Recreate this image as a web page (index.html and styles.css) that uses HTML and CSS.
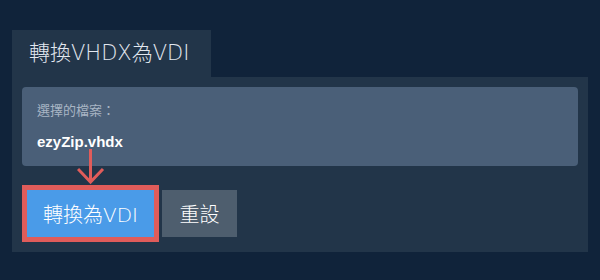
FILE: index.html
```html
<!DOCTYPE html>
<html lang="zh-Hant">

<head>
    <meta charset="UTF-8">
    <meta name="viewport" content="width=device-width, initial-scale=1.0">
    <title>轉換VHDX為VDI</title>
    <link rel="stylesheet" href="styles.css">
</head>

<body>

    <div class="page">
        <div class="tab">轉換VHDX為VDI</div>

        <div class="panel">
            <div class="file-box">
                <div class="file-label">選擇的檔案：</div>
                <div class="file-name">ezyZip.vhdx</div>
            </div>

            <!-- annotation arrow pointing at the convert button -->
            <svg class="hint-arrow" width="40" height="40" viewBox="0 0 40 40">
                <line x1="13.5" y1="3" x2="13.5" y2="36" stroke="#e05c5a" stroke-width="3" />
                <polyline points="1,23 13.5,36 26,23" fill="none" stroke="#e05c5a" stroke-width="3" />
            </svg>

            <div class="actions">
                <button type="button" class="btn btn-convert">轉換為VDI</button>
                <button type="button" class="btn btn-reset">重設</button>
            </div>
        </div>
    </div>

</body>

</html>
```

FILE: styles.css
```css
* {
    margin: 0;
    padding: 0;
    box-sizing: border-box;
}

body {
    background-color: #10233a;
    font-family: 'Liberation Sans', 'Noto Sans CJK TC', sans-serif;
    color: #ffffff;
}

.page {
    padding: 30px 12px 0 12px;
}

.tab {
    display: inline-block;
    width: 199px;
    height: 47px;
    line-height: 47px;
    padding: 0 0 0 17px;
    background-color: #223549;
    color: #e2e8f0;
    font-family: 'DejaVu Sans', 'Noto Sans CJK TC', sans-serif;
    font-size: 21px;
    font-weight: 200;
    white-space: nowrap;
    vertical-align: top;
}

.panel {
    position: relative;
    background-color: #223549;
    padding: 10px 10px 15px 10px;
}

.file-box {
    background-color: #4a5f78;
    border-radius: 4px;
    padding: 14px 15px 13px 15px;
    height: 79px;
}

.file-label {
    font-size: 13px;
    line-height: 20px;
    color: #a8b5c4;
}

.file-name {
    margin-top: 10px;
    font-size: 15px;
    line-height: 22px;
    font-weight: bold;
    color: #ffffff;
}

.hint-arrow {
    position: absolute;
    left: 65px;
    top: 69px;
}

.actions {
    display: flex;
    gap: 8px;
    margin-top: 24px;
    padding-left: 5px;
}

.btn {
    height: 47px;
    border: none;
    color: #ffffff;
    font-family: 'DejaVu Sans', 'Noto Sans CJK TC', sans-serif;
    font-size: 20px;
    font-weight: 200;
    padding: 0;
    white-space: nowrap;
    cursor: pointer;
}

.btn-convert {
    width: 127px;
    background-color: #4a9be8;
    outline: 5px solid #e05c5a;
}

.btn-reset {
    width: 75px;
    background-color: #4e5e6e;
}
```
